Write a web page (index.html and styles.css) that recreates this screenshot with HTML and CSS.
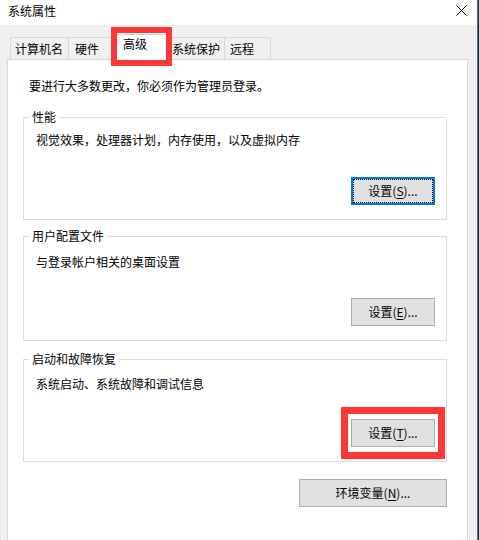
FILE: index.html
```html
<!DOCTYPE html>
<html lang="zh-CN">
<head>
<meta charset="utf-8">
<title>系统属性</title>
<link rel="stylesheet" href="styles.css">
</head>
<body>
<div class="window">
  <div class="titlebar">
    <span class="title">系统属性</span>
    <svg class="close" width="11" height="11" viewBox="0 0 11 11"><path d="M0.5 0.5 L10.5 10.5 M10.5 0.5 L0.5 10.5" stroke="#000" stroke-width="1" fill="none"/></svg>
  </div>
  <div class="client">
    <div class="tabs">
      <div class="tab tab-name">计算机名</div>
      <div class="tab tab-hw">硬件</div>
      <div class="tab tab-adv active">高级<span class="mark mark-tab"></span></div>
      <div class="tab tab-prot">系统保护</div>
      <div class="tab tab-remote">远程</div>
    </div>
    <div class="panel">
      <p class="notice">要进行大多数更改，你必须作为管理员登录。</p>
      <fieldset class="group group-perf">
        <legend>性能</legend>
        <p class="desc">视觉效果，处理器计划，内存使用，以及虚拟内存</p>
        <div class="actions"><button class="btn focused">设置(<u>S</u>)...</button></div>
      </fieldset>
      <fieldset class="group group-profile">
        <legend>用户配置文件</legend>
        <p class="desc">与登录帐户相关的桌面设置</p>
        <div class="actions"><button class="btn">设置(<u>E</u>)...</button></div>
      </fieldset>
      <fieldset class="group group-startup">
        <legend>启动和故障恢复</legend>
        <p class="desc">系统启动、系统故障和调试信息</p>
        <div class="actions"><span class="hl"><button class="btn">设置(<u>T</u>)...</button><span class="mark mark-btn"></span></span></div>
      </fieldset>
      <div class="env-row"><button class="btn btn-wide">环境变量(<u>N</u>)...</button></div>
    </div>
  </div>
</div>
</body>
</html>
```

FILE: styles.css
```css
* { box-sizing: border-box; }
html, body {
  margin: 0;
  padding: 0;
  background: #2e2e2e;
  width: 479px;
  height: 540px;
  overflow: hidden;
}
body {
  font-family: "Microsoft YaHei UI", "Noto Sans CJK SC", sans-serif;
  font-size: 12px;
  line-height: 16px;
  color: #000;
}
.window {
  width: 478px;
  height: 540px;
  border-right: 1px solid #1b7fd4;
  background: #f0f0f0;
  overflow: hidden;
}
.titlebar {
  height: 25px;
  background: #fff;
  display: flex;
  justify-content: space-between;
  align-items: flex-start;
  padding: 3px 10px 0 8px;
}
.close { margin-top: 2px; display: block; }
.client {
  background: #f0f0f0;
  height: 515px;
}
.tabs {
  display: flex;
  align-items: flex-end;
  height: 22px;
  margin: 12px 0 0 10px;
}
.tab {
  height: 22px;
  border: 1px solid #d9d9d9;
  border-bottom: none;
  border-right: none;
  padding-top: 3px;
  background: #f0f0f0;
  white-space: nowrap;
}
.tab-name { width: 58px; padding-left: 4px; }
.tab-hw { width: 43px; padding-left: 6px; }
.tab-adv { width: 59px; padding-left: 11px; }
.tab-prot { width: 54px; padding-left: 1px; }
.tab-remote { width: 47px; padding-left: 5px; border-right: 1px solid #d9d9d9; }
.tab.active {
  height: 26px;
  margin-bottom: -1px;
  padding-top: 1px;
  background: #fff;
  position: relative;
  z-index: 2;
}
.mark {
  position: absolute;
  border: 6px solid #fd3636;
  z-index: 3;
  pointer-events: none;
}
.mark-tab {
  left: -1px;
  top: -8px;
  width: 61px;
  height: 39px;
}
.panel {
  margin-left: 7px;
  width: 461px;
  height: 520px;
  border: 1px solid #d9d9d9;
  background: #fff;
  position: relative;
  z-index: 1;
}
.notice {
  margin: 0;
  padding: 18px 0 0 21px;
}
.group {
  margin: 0 20px 0 15px;
  padding: 0;
  border: 1px solid #dcdcdc;
  min-width: 0;
}
.group legend {
  margin-left: 5px;
  padding: 0 3px;
  line-height: 14px;
}
.desc {
  margin: 0;
  padding-left: 12px;
}
.actions {
  display: flex;
  justify-content: flex-end;
  padding: 0 11px 14px 0;
}
.group-perf { margin-top: 16px; }
.group-perf .desc { padding-top: 8px; }
.group-perf .actions { margin-top: 29px; }
.group-profile { margin-top: 9px; }
.group-profile .desc { padding-top: 11px; }
.group-profile .actions { margin-top: 28px; }
.group-startup { margin-top: 11px; }
.group-startup .desc { padding-top: 10px; }
.group-startup .actions { margin-top: 27px; }
.btn {
  width: 84px;
  height: 28px;
  padding: 0;
  border: 1px solid #adadad;
  background: #e1e1e1;
  font-family: inherit;
  font-size: 12px;
  line-height: 16px;
  color: #000;
  display: block;
}
.btn u { text-underline-offset: 2px; }
.btn.focused {
  border: 2px solid #0078d7;
  outline: 1px dotted #000;
  outline-offset: -3px;
}
.hl {
  position: relative;
  display: block;
}
.mark-btn {
  left: -10px;
  top: -12px;
  width: 104px;
  height: 52px;
  border-width: 7px;
}
.env-row {
  display: flex;
  justify-content: flex-end;
  padding-right: 20px;
  margin-top: 17px;
}
.btn-wide { width: 148px; }
```
